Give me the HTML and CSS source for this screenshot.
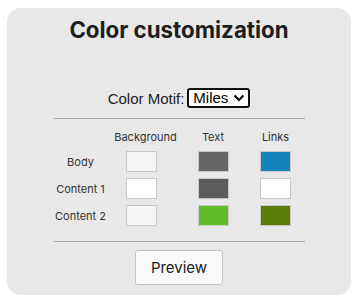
FILE: index.html
```html
<!DOCTYPE html>
<html>
<head>
<meta charset="utf-8">
<link rel="stylesheet" href="styles.css">
</head>
<body>
<div class="card">
  <h1 class="title">Color customization</h1>
  <div class="motif">
    <label class="motif-label">Color Motif:</label>
    <span class="select-wrap">
      <select class="select"><option>Miles</option></select>
      <svg class="chev" width="12" height="8" viewBox="0 0 12 8"><path d="M1.5 1.5 L6 6 L10.5 1.5" fill="none" stroke="#000" stroke-width="2.2"/></svg>
    </span>
  </div>
  <hr class="rule">
  <div class="grid">
    <div></div>
    <div class="head">Background</div>
    <div class="head">Text</div>
    <div class="head">Links</div>

    <div class="label">Body</div>
    <div class="cell cell-bg"><span class="sw" style="background:#f5f5f5"></span></div>
    <div class="cell"><span class="sw" style="background:#666666"></span></div>
    <div class="cell"><span class="sw" style="background:#1682bd"></span></div>

    <div class="label">Content 1</div>
    <div class="cell cell-bg"><span class="sw" style="background:#ffffff"></span></div>
    <div class="cell"><span class="sw" style="background:#5b5b5b"></span></div>
    <div class="cell"><span class="sw" style="background:#ffffff"></span></div>

    <div class="label">Content 2</div>
    <div class="cell cell-bg"><span class="sw" style="background:#f5f5f5"></span></div>
    <div class="cell"><span class="sw" style="background:#64bb28"></span></div>
    <div class="cell"><span class="sw" style="background:#5d7d0b"></span></div>
  </div>
  <hr class="rule">
  <div class="actions"><button class="btn">Preview</button></div>
</div>
</body>
</html>
```
FILE: styles.css
```css
html, body { margin: 0; padding: 0; background: #ffffff; }
body { padding: 8px 10px 0 7px; font-family: Inter, "Noto Sans", sans-serif; color: #222; }
.card {
  width: 344px;
  height: 287px;
  box-sizing: border-box;
  background: #e8e8e8;
  border-radius: 14px;
  padding-top: 7px;
}
.title {
  margin: 0;
  text-align: center;
  font-size: 22.3px;
  font-weight: 700;
  line-height: 30px;
  color: #1e1e1e;
}
.motif {
  margin-top: 43px;
  display: flex;
  justify-content: center;
  align-items: center;
  gap: 3px;
  font-family: "Liberation Sans", Arial, sans-serif;
  font-size: 15px;
  height: 20px;
}
.motif-label { color: #222; }
.select-wrap { position: relative; display: inline-block; }
.select {
  appearance: none;
  -webkit-appearance: none;
  font-family: "Liberation Sans", Arial, sans-serif;
  font-size: 15px;
  width: 63px;
  height: 20px;
  padding: 0 0 0 4px;
  border: 2px solid #111;
  border-radius: 3px;
  background: #fff;
  color: #000;
  line-height: 16px;
  display: block;
}
.chev { position: absolute; right: 5px; top: 6px; pointer-events: none; }
.rule {
  margin: 10px 0 0 47px;
  width: 251px;
  border: 0;
  border-top: 1px solid #a8a8a8;
  height: 0;
}
.grid {
  margin: 10px 0 0 40px;
  display: grid;
  grid-template-columns: 67px 63px 72px 53px;
  grid-template-rows: 16px;
  grid-auto-rows: 21px;
  row-gap: 6px;
  font-size: 11px;
  color: #333;
  height: 102px;
}
.head, .label, .cell { display: flex; align-items: center; justify-content: center; }
.cell-bg { justify-content: flex-start; padding-left: 12px; }
.sw {
  display: block;
  width: 31px;
  height: 21px;
  box-sizing: border-box;
  border: 1px solid #c8c8c8;
}
.actions { display: flex; justify-content: center; margin-top: 8px; }
.btn {
  font-family: Inter, "Noto Sans", sans-serif;
  font-size: 15px;
  color: #222;
  width: 88px;
  height: 35px;
  background: #f9f9f9;
  border: 1px solid #c4c4c4;
  border-radius: 3px;
}
```
